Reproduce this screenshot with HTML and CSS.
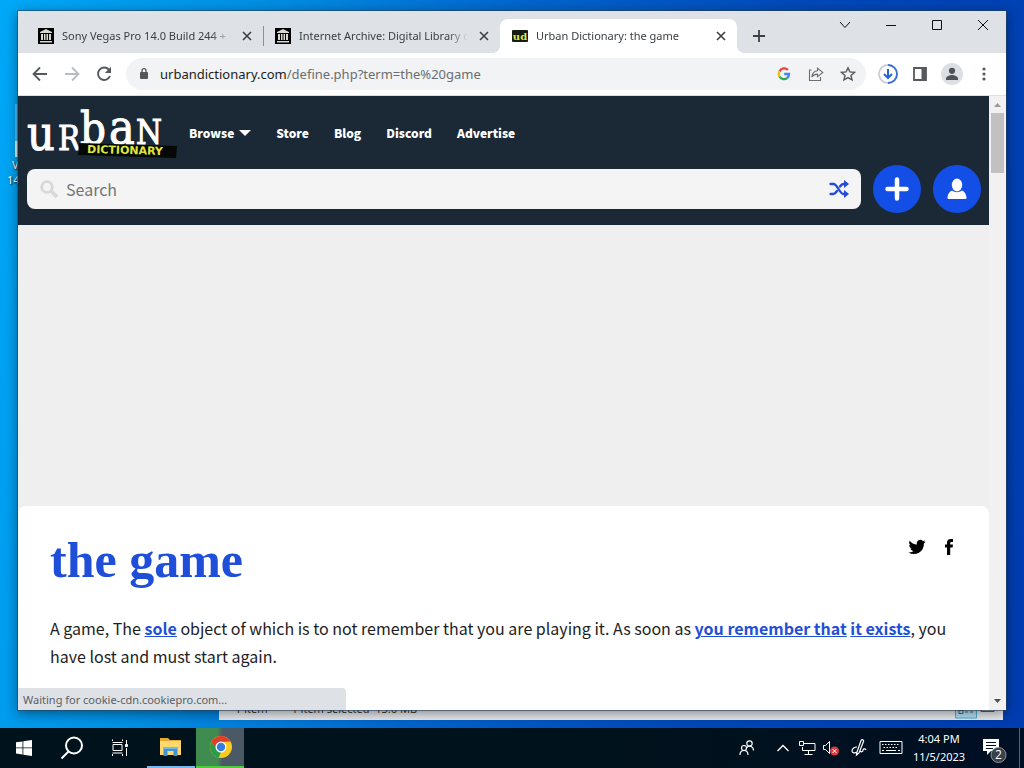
FILE: index.html
```html
<!DOCTYPE html>
<html lang="en">
<head>
<meta charset="utf-8">
<meta name="viewport" content="width=device-width, initial-scale=1">
<title>Urban Dictionary: the game</title>
<link rel="stylesheet" href="styles.css">
</head>
<body>
<svg class="defs" aria-hidden="true">
  <symbol id="archive" viewBox="0 0 16 16"><path fill="#000" d="M0 0h16v16H0z"/><path fill="#d8d8d2" d="M2 4 8 1l6 3v1H2zM3 6h2v6H3zm3 0h1.500v6H6zm2.500 0H10v6H8.500zM11 6h2v6h-2zM2 13h12v1.500H2z"/></symbol>
  <symbol id="close" viewBox="0 0 10 10"><path fill="none" stroke="currentColor" stroke-width="1.600" d="m1 1 8 8M9 1 1 9"/></symbol>
</svg>

<main class="desktop">
  <div class="shortcut"><span class="shortcut-icon"></span><span>Vegas</span><span>14.0</span></div>

  <section class="explorer" aria-label="File Explorer">
    <footer class="explorer-status">
      <span>1 item</span><span>1 item selected&nbsp; 13.6 MB</span>
      <svg width="48" height="16" viewBox="0 0 48 16"><path fill="#b5e3f7" stroke="#4bb0dc" d="M.5-1h21v15H.5z"/><path fill="none" stroke="#56656e" d="M4 6.500h4v3H4zM10 8h3m2 0h3M26 3v4.500h13V3"/></svg>
    </footer>
  </section>

  <section class="window" aria-label="Browser">
    <header class="tabstrip">
      <nav class="tabs" aria-label="Tabs">
        <div class="tab"><svg width="16" height="16"><use href="#archive"/></svg><span class="tab-title">Sony Vegas Pro 14.0 Build 244 + Crack</span><button class="tab-close" aria-label="Close tab"><svg width="10" height="10"><use href="#close"/></svg></button></div>
        <div class="tab divided"><svg width="16" height="16"><use href="#archive"/></svg><span class="tab-title">Internet Archive: Digital Library of Free</span><button class="tab-close" aria-label="Close tab"><svg width="10" height="10"><use href="#close"/></svg></button></div>
        <div class="tab active"><svg width="16" height="16" viewBox="0 0 16 16"><rect y="2" width="16" height="12" rx="1" fill="#171c12"/><text class="favicon-text" x="8" y="12" text-anchor="middle">ud</text></svg><span class="tab-title">Urban Dictionary: the game</span><button class="tab-close" aria-label="Close tab"><svg width="10" height="10"><use href="#close"/></svg></button></div>
        <button class="new-tab" aria-label="New tab"><svg width="12" height="12" viewBox="0 0 12 12"><path stroke="currentColor" stroke-width="1.800" d="M6 0v12M0 6h12"/></svg></button>
      </nav>
      <div class="controls">
        <button aria-label="Search tabs"><svg width="12" height="12" viewBox="0 0 12 12"><path fill="none" stroke="currentColor" d="m1 3 5 5.500L11 3"/></svg></button>
        <button aria-label="Minimize"><svg width="12" height="12" viewBox="0 0 12 12"><path stroke="currentColor" d="M1 6.500h10"/></svg></button>
        <button aria-label="Maximize"><svg width="12" height="12" viewBox="0 0 12 12"><path fill="none" stroke="currentColor" d="M1.500 1.500h9v9h-9z"/></svg></button>
        <button aria-label="Close"><svg width="12" height="12" viewBox="0 0 12 12"><path stroke="currentColor" d="m1 1 10 10M11 1 1 11"/></svg></button>
      </div>
    </header>

    <div class="toolbar">
      <button class="tool" aria-label="Back"><svg width="16" height="16" viewBox="0 0 16 16"><path fill="none" stroke="#55595d" stroke-width="1.800" d="M15 8H2m6-6.500L1.500 8 8 14.500"/></svg></button>
      <button class="tool" aria-label="Forward"><svg width="16" height="16" viewBox="0 0 16 16"><path fill="none" stroke="#b9bcbf" stroke-width="1.800" d="M1 8h13M8 1.500 14.500 8 8 14.500"/></svg></button>
      <button class="tool" aria-label="Reload"><svg width="16" height="16" viewBox="0 0 16 16"><path fill="none" stroke="#55595d" stroke-width="1.900" d="M12.800 3.500A6.200 6.200 0 1 0 14 10"/><path fill="#55595d" d="M15 .8V7H8.800z"/></svg></button>
      <div class="omnibox">
        <svg class="lock" width="10" height="14" viewBox="0 0 10 14"><rect x="1" y="5" width="8" height="7" rx="1" fill="#55595d"/><path fill="none" stroke="#55595d" stroke-width="1.300" d="M3 5.500V3.600a2 2 0 0 1 4 0v1.900"/></svg>
        <p class="url">urbandictionary.com<span>/define.php?term=the%20game</span></p>
        <button class="tool" aria-label="Google search"><svg width="14" height="14" viewBox="0 0 14 14" fill="none" stroke-width="2.300"><path stroke="#ea4335" d="M10.900 3A5.100 5.100 0 0 0 2.500 4.500"/><path stroke="#fbbc05" d="M2.500 4.500a5.100 5.100 0 0 0 0 5"/><path stroke="#34a853" d="M2.500 9.500a5.100 5.100 0 0 0 7.700 1.500"/><path stroke="#4285f4" d="M10.200 11A5 5 0 0 0 12 7H7.200"/></svg></button>
        <button class="tool" aria-label="Share"><svg width="16" height="16" viewBox="0 0 16 16"><path fill="none" stroke="#6b6f73" stroke-width="1.100" d="M3.500 4H1.500v10.500h11V11M9.500 2.200v2.500C6 5 4.200 7.300 3.800 11c1.400-2 3-2.900 5.700-2.900v2.600L14.800 6.400z"/></svg></button>
        <button class="tool" aria-label="Bookmark"><svg width="16" height="16" viewBox="0 0 16 16"><path fill="none" stroke="#55595d" stroke-width="1.400" d="m8 1.800 1.900 4.100 4.500.5-3.400 3 1 4.500L8 11.600l-4 2.300 1-4.500-3.400-3 4.500-.5z"/></svg></button>
      </div>
      <button class="tool" aria-label="Downloads"><svg width="20" height="20" viewBox="0 0 20 20" fill="none"><circle cx="10" cy="10" r="9" stroke="#c9cdd5" stroke-width="1.800"/><path stroke="#3b6fd8" stroke-width="1.800" d="M10 1a9 9 0 0 1 0 18"/><path stroke="#2d63d8" stroke-width="2" d="M10 5v9m-4-4 4 4 4-4"/></svg></button>
      <button class="tool" aria-label="Side panel"><svg width="14" height="14" viewBox="0 0 14 14"><path fill="none" stroke="#55595d" stroke-width="1.800" d="M1 1h12v12H1z"/><path fill="#55595d" d="M8.500 1H13v12H8.500z"/></svg></button>
      <button class="tool" aria-label="Profile"><svg width="22" height="22" viewBox="0 0 22 22"><circle cx="11" cy="11" r="11" fill="#dcdfe3"/><circle cx="11" cy="7.800" r="3.100" fill="#4e5358"/><path fill="#4e5358" d="M5 17v-1.500c0-2.300 4-3.500 6-3.500s6 1.200 6 3.500V17z"/></svg></button>
      <button class="tool" aria-label="Menu"><svg width="4" height="14" viewBox="0 0 4 14" fill="#55595d"><circle cx="2" cy="2" r="1.600"/><circle cx="2" cy="7" r="1.600"/><circle cx="2" cy="12" r="1.600"/></svg></button>
    </div>

    <div class="viewport">
      <div class="page">
        <header class="site-header">
          <div class="site-nav">
            <a class="logo" href="#" aria-label="Urban Dictionary"><svg width="152" height="52" viewBox="0 0 152 52">
              <g class="logo-letters"><text x="0" y="44" font-size="48">u</text><text x="31" y="44" font-size="33">R</text><text x="53" y="38" font-size="45">b</text><text x="82" y="38" font-size="48">a</text><text x="109" y="38" font-size="33">N</text></g>
              <path d="m52 37 98 3-1 12-98-3z" fill="#050805"/>
              <text class="logo-small" x="60" y="47" transform="rotate(1.500 60 47)">DICTIONARY</text>
            </svg></a>
            <nav class="links"><a href="#">Browse <svg width="12" height="6" viewBox="0 0 12 6"><path fill="#fff" d="M0 0h12L6 6z"/></svg></a><a href="#">Store</a><a href="#">Blog</a><a href="#">Discord</a><a href="#">Advertise</a></nav>
          </div>
          <form class="search-row">
            <label class="search"><svg width="18" height="18" viewBox="0 0 18 18" fill="none" stroke="#d7d8da"><circle cx="7" cy="7" r="5.300" stroke-width="2.800"/><path stroke-width="3.500" d="m11 11 6 6"/></svg>
              <input type="text" placeholder="Search" aria-label="Search">
              <button type="button" class="plain" aria-label="Random word"><svg width="20" height="18" viewBox="0 0 20 18"><path fill="none" stroke="#244ad8" stroke-width="2.300" stroke-linecap="round" d="M1.500 4h3c4 0 6 10 10 10H16M1.500 14h3c1.500 0 2.500-1.500 3.500-3m3-4.500C12 5 13 4 14.500 4H16"/><path fill="#244ad8" d="m15 0 5 4-5 4zm0 10 5 4-5 4z"/></svg></button>
            </label>
            <button type="button" class="round" aria-label="Add definition"><svg width="24" height="24" viewBox="0 0 24 24"><path stroke="#fff" stroke-width="4.500" stroke-linecap="round" d="M12 2.500v19M2.500 12h19"/></svg></button>
            <button type="button" class="round" aria-label="Account"><svg width="20" height="22" viewBox="0 0 20 22" fill="#fff"><ellipse cx="10" cy="7" rx="5.200" ry="6.500"/><path d="M5 12.500c3 2.200 7 2.200 10 0 2.500 1 4.500 3.500 4.500 7.500 0 .7-.5 1-1 1h-17c-.5 0-1-.3-1-1 0-4 2-6.500 4.500-7.500z"/></svg></button>
          </form>
        </header>
        <div class="ad-space"></div>
        <article class="definition">
          <div class="definition-head">
            <h1>the game</h1>
            <div class="share">
              <a href="#" aria-label="Twitter"><svg width="18" height="18" viewBox="0 0 24 24"><path d="M23.600 4.900c-.9.400-1.800.6-2.700.8 1-.6 1.700-1.500 2.100-2.600-.9.500-1.900.9-3 1.100a4.700 4.700 0 0 0-8.100 4.300C8 8.300 4.500 6.400 2.200 3.500c-1.300 2.200-.7 4.900 1.400 6.300-.8 0-1.500-.2-2.100-.6 0 2.300 1.600 4.300 3.800 4.700-.7.200-1.400.2-2.100.1.600 1.900 2.300 3.200 4.400 3.300A9.500 9.500 0 0 1 .6 19.200 13.400 13.400 0 0 0 21.200 7.300c.9-.7 1.700-1.500 2.400-2.400z"/></svg></a>
              <a href="#" aria-label="Facebook"><svg width="10" height="18" viewBox="0 0 10 18"><path d="M3 17V9.500H1V6.500h2V4.700C3 2.300 4.400 1 6.600 1H9v3H7.400C6.500 4 6.200 4.400 6.200 5.200v1.300H9l-.4 3H6.200V17z"/></svg></a>
            </div>
          </div>
          <p class="meaning">A game, The <a href="#">sole</a> object of which is to not remember that you are playing it. As soon as <a href="#">you remember that</a> <a href="#">it exists</a>, you have lost and must start again.</p>
        </article>
      </div>
      <div class="scrollbar" aria-hidden="true">
        <svg width="17" height="17" viewBox="0 0 17 17"><path fill="#9a9a9a" d="m5 11 3.500-4 3.500 4z"/></svg>
        <div class="thumb"></div>
        <svg width="17" height="17" viewBox="0 0 17 17"><path fill="#505050" d="m5 6 3.500 4L12 6z"/></svg>
      </div>
      <output class="loading">Waiting for cookie-cdn.cookiepro.com...</output>
    </div>
  </section>
</main>

<footer class="taskbar">
  <button aria-label="Start"><svg width="16" height="16" viewBox="0 0 16 16" fill="#fff"><path d="m0 2.300 6.500-.9v6.100H0zM7.300 1.300 16 0v7.500H7.300zM0 8.300h6.500v6.200L0 13.600zM7.300 8.300H16V16l-8.700-1.300z"/></svg></button>
  <button aria-label="Search"><svg width="24" height="24" viewBox="0 0 24 24" fill="none" stroke="#fff" stroke-width="2"><circle cx="14" cy="9.500" r="8"/><path d="m8.500 15.500-7 7"/></svg></button>
  <button aria-label="Task view"><svg width="18" height="18" viewBox="0 0 18 18" fill="none" stroke="#fff"><path d="M1.500 2V.5m10 1.500V.5M1.500 3.500h10M2 5.500h9v6H2zM1.500 14h10m-10 1v2m10-2v2M15.500 1v4m0 4v8"/><path fill="#fff" d="M14.500 5.500h2v2h-2z"/></svg></button>
  <button class="app" aria-label="File Explorer"><svg width="22" height="20" viewBox="0 0 22 20"><path fill="#e8a92e" d="M0 1h8l2 2h11v4H0z"/><path fill="#ffd970" d="M0 4h21v14H0z"/><path fill="#4093ce" d="M3.500 10h14v9h-4v-5h-6v5h-4z"/><path fill="#72bbe5" d="M3.500 10h14v2h-14z"/></svg></button>
  <button class="app current" aria-label="Chrome"><svg width="24" height="24" viewBox="0 0 24 24"><circle cx="12" cy="12" r="11" fill="#fbc91f"/><path fill="#df3e2f" d="M2.500 6.500a11 11 0 0 1 19 0L12 7 7.200 14z"/><path fill="#2c9b49" d="M2.500 6.500 7.700 14.500 12 17l-2.300 5.700A11 11 0 0 1 2.500 6.500z"/><circle cx="12" cy="12" r="5.500" fill="#fff"/><circle cx="12" cy="12" r="4.200" fill="#377de0"/></svg></button>
  <div class="tray">
    <button class="people" aria-label="People"><svg width="16" height="16" viewBox="0 0 16 16" fill="none" stroke="#fff" stroke-width="1.200"><circle cx="10.500" cy="3.500" r="2.700"/><circle cx="5" cy="8" r="2.500"/><path d="M1 15c0-6 8-6 8 0M7.500 7.800c3-3 7-1.500 7 2.700"/></svg></button>
    <button aria-label="Hidden icons"><svg width="12" height="8" viewBox="0 0 12 8"><path fill="none" stroke="#fff" stroke-width="1.300" d="m.5 7 5.500-5.500L11.500 7"/></svg></button>
    <button aria-label="Network"><svg width="17" height="14" viewBox="0 0 17 14" fill="none" stroke="#fff"><path d="M5 2.500h11v7H3.500V6M9.500 10v3m-4 .5h8M.5.500h4v4h-4z"/></svg></button>
    <button aria-label="Volume muted"><svg width="18" height="16" viewBox="0 0 18 16"><path fill="none" stroke="#fff" d="M1.500 5.500h2l4-4v12l-4-4h-2z"/><circle cx="12.500" cy="11" r="4.500" fill="#d9383e"/><path stroke="#fff" d="m10.500 9 4 4m0-4-4 4"/></svg></button>
    <button class="wide" aria-label="Pen"><svg width="16" height="18" viewBox="0 0 16 18" fill="none" stroke="#fff" stroke-width="1.200"><path d="M6 13 10 1.500c1-1.500 3-.5 2.500 1L8 14l-2.500 2zM6 8c-3 0-5 2-5 4s3 2.500 5 1m3-1c2 2 3 0 3-1s2-2 3 0"/></svg></button>
    <button class="wide" aria-label="Keyboard"><svg width="24" height="14" viewBox="0 0 24 14" fill="none" stroke="#fff"><path d="M1 .5h22v12H1z"/><path stroke-dasharray="1.500 1.500" d="M3 3.500h18M4.500 6.500h15"/><path d="M3 9.500h2m2 0h10m2 0h2"/></svg></button>
    <time class="clock" datetime="2023-11-05T16:04"><span>4:04 PM</span><span>11/5/2023</span></time>
    <button class="notifications" aria-label="2 notifications"><svg width="24" height="26" viewBox="0 0 24 26"><path fill="#fff" d="M0 1h16v12H8l-4 4v-4H0z"/><path stroke="#00101c" d="M3 4.500h10m-10 3h10m-10 3h7"/><circle cx="15.500" cy="17" r="7.500" fill="#36414a" stroke="#8d969d"/><text class="badge" x="15.500" y="21" text-anchor="middle">2</text></svg></button>
    <span class="show-desktop"></span>
  </div>
</footer>
</body>
</html>
```
FILE: styles.css
```css
* { box-sizing: border-box; }

body {
  margin: 0;
  height: 100vh;
  display: flex;
  flex-direction: column;
  overflow: hidden;
  font-family: "Noto Sans", "Open Sans", sans-serif;
  font-size: 11px;
  background: linear-gradient(100deg, #00a8f8 0%, #0090e4 22%, #0064cc 46%, #0048b8 70%, #003cb0 100%);
}

button { display: flex; align-items: center; justify-content: center; padding: 0; border: 0; background: none; color: inherit; font: inherit; }
svg { display: block; flex: none; }
h1, p { margin: 0; }
.defs { position: absolute; width: 0; height: 0; }

.desktop { position: relative; flex: 1; min-height: 0; }

.shortcut {
  position: absolute;
  top: 104px;
  left: 7px;
  display: flex;
  flex-direction: column;
  color: #fff;
  line-height: 15px;
  text-shadow: 1px 1px 2px #000;
}
.shortcut span + span { padding-left: 5px; }
.shortcut span + span + span { padding-left: 0; }
.shortcut-icon { width: 30px; height: 53px; margin-left: 8px; background: linear-gradient(#4cc0fb 70%, #e6f5fd 70%); }

.explorer {
  position: absolute;
  left: 219px;
  right: 21px;
  top: 60px;
  bottom: 8px;
  display: flex;
  align-items: flex-end;
  background: #e9ebee;
}
.explorer-status { flex: 1; display: flex; gap: 24px; padding-left: 16px; line-height: 22px; color: #333; }
.explorer-status svg { margin-left: auto; align-self: flex-end; }

.window {
  position: absolute;
  inset: 11px 18px 18px 18px;
  display: flex;
  flex-direction: column;
  background: #fff;
  box-shadow: 0 0 0 1px #26415a99, 0 3px 12px #0007;
}

.tabstrip { display: flex; height: 42px; background: #dee1e6; color: #3c4043; }
.tabs { display: flex; flex: 1; min-width: 0; padding: 8px 0 0 8px; }
.tab { position: relative; flex: 0 1 237px; min-width: 0; display: flex; align-items: center; gap: 8px; padding: 0 8px 0 12px; }
.tab.divided::before { content: ""; position: absolute; left: 0; width: 1px; height: 20px; background: #8c9095; }
.tab.active { background: #fff; border-radius: 8px 8px 0 0; }
.tab.active::before, .tab.active::after { content: ""; position: absolute; bottom: 0; width: 8px; height: 8px; }
.tab.active::before { right: 100%; background: radial-gradient(circle at 0 0, transparent 8px, #fff 8px); }
.tab.active::after { left: 100%; background: radial-gradient(circle at 100% 0, transparent 8px, #fff 8px); }
.tab-title { flex: 1; overflow: hidden; white-space: nowrap; line-height: 18px; mask-image: linear-gradient(90deg, #000 88%, transparent); }
.tab-close { width: 16px; height: 16px; }
.new-tab { width: 28px; margin-left: 8px; }
.favicon-text { font: bold 10px "DejaVu Serif", serif; fill: #dbe84c; }
.controls { display: flex; color: #111; }
.controls button { width: 46px; height: 28px; }

.toolbar { display: flex; align-items: center; height: 43px; padding: 0 6px; border-bottom: 1px solid #dcdfe2; }
.tool { width: 32px; height: 32px; flex: none; }
.omnibox { flex: 1; min-width: 0; display: flex; align-items: center; height: 32px; margin: 0 6px; padding: 0 2px 0 13px; border-radius: 16px; background: #f1f3f4; }
.url { flex: 1; min-width: 0; overflow: hidden; white-space: nowrap; padding-left: 11px; font-size: 13px; line-height: 20px; color: #202124; }
.url span { color: #6a6e72; }

.viewport { position: relative; flex: 1; min-height: 0; display: flex; overflow: hidden; background: #efefef; }
.page { flex: 1; min-width: 0; display: flex; flex-direction: column; font-family: "Noto Sans CJK JP", sans-serif; }
.site-header { padding: 0 8px 12px 9px; background: #1b2936; }
.site-nav { display: flex; align-items: center; gap: 10px; height: 69px; }
.logo { padding-top: 2px; }
.links { display: flex; gap: 25px; padding-top: 5px; }
.links a { display: flex; align-items: center; gap: 5px; color: #fff; font-size: 12px; font-weight: 900; line-height: 20px; text-decoration: none; }
.logo-letters { font-family: "DejaVu Serif Condensed", "DejaVu Serif", serif; fill: #fff; stroke: #fff; stroke-width: 1px; }
.logo-small { font: bold 11px "DejaVu Sans", sans-serif; fill: #dfe83a; }
.search-row { display: flex; align-items: center; gap: 12px; }
.search { flex: 1; min-width: 0; display: flex; align-items: center; gap: 8px; height: 40px; padding: 0 12px 0 13px; border-radius: 8px; background: #f4f4f5; }
.search input { flex: 1; min-width: 0; padding: 0; border: 0; outline: 0; background: none; font: 16px/24px "Noto Sans CJK JP", sans-serif; color: #333; }
.search input::placeholder { color: #757575; }
.round { width: 48px; height: 48px; border-radius: 50%; background: #134fe7; }

.ad-space { height: 281px; flex: none; }
.definition { flex: 1 0 auto; padding: 28px 32px; border-radius: 8px 8px 0 0; background: #fff; }
.definition-head { display: flex; justify-content: space-between; align-items: flex-start; margin-bottom: 28px; }
h1 { font: bold 50px/52px "Liberation Serif", serif; color: #1f4fd8; }
.share { display: flex; gap: 18px; padding: 4px 3px 0 0; }
.meaning { font-size: 16px; line-height: 28px; color: #1d1d1f; }
.meaning a { color: #1f4fd8; font-weight: 700; text-decoration: underline; }

.scrollbar { width: 17px; display: flex; flex-direction: column; background: #f1f1f1; }
.thumb { height: 60px; margin: 0 2px; background: #c1c1c1; }
.scrollbar svg:last-child { margin-top: auto; }
.loading { position: absolute; left: 0; bottom: 0; width: 328px; height: 22px; padding: 0 5px; border-radius: 0 4px 0 0; background: #dee1e6; color: #5a5e63; line-height: 24px; }

.taskbar { display: flex; height: 40px; flex: none; background: linear-gradient(90deg, #00121c 60%, #000f24); color: #fff; }
.taskbar > button { width: 48px; }
.taskbar .app { border-bottom: 2px solid #76b9ed; margin-left: 3px; }
.taskbar .app.current { margin-left: 1px; padding-left: 2px; background: linear-gradient(90deg, #3f8b50 45%, #4b5967 55%); border-color: #4fcb3c; }
.tray { display: flex; align-items: stretch; margin-left: auto; }
.tray button { width: 24px; }
.tray .people { width: 48px; }
.tray .wide { width: 32px; }
.clock { display: flex; flex-direction: column; align-items: center; width: 64px; padding-top: 2px; line-height: 18px; }
.tray .notifications { width: 48px; padding-top: 6px; }
.badge { font: 12px "Open Sans", sans-serif; fill: #fff; }
.show-desktop { width: 5px; border-left: 1px solid #56636f; }
```
